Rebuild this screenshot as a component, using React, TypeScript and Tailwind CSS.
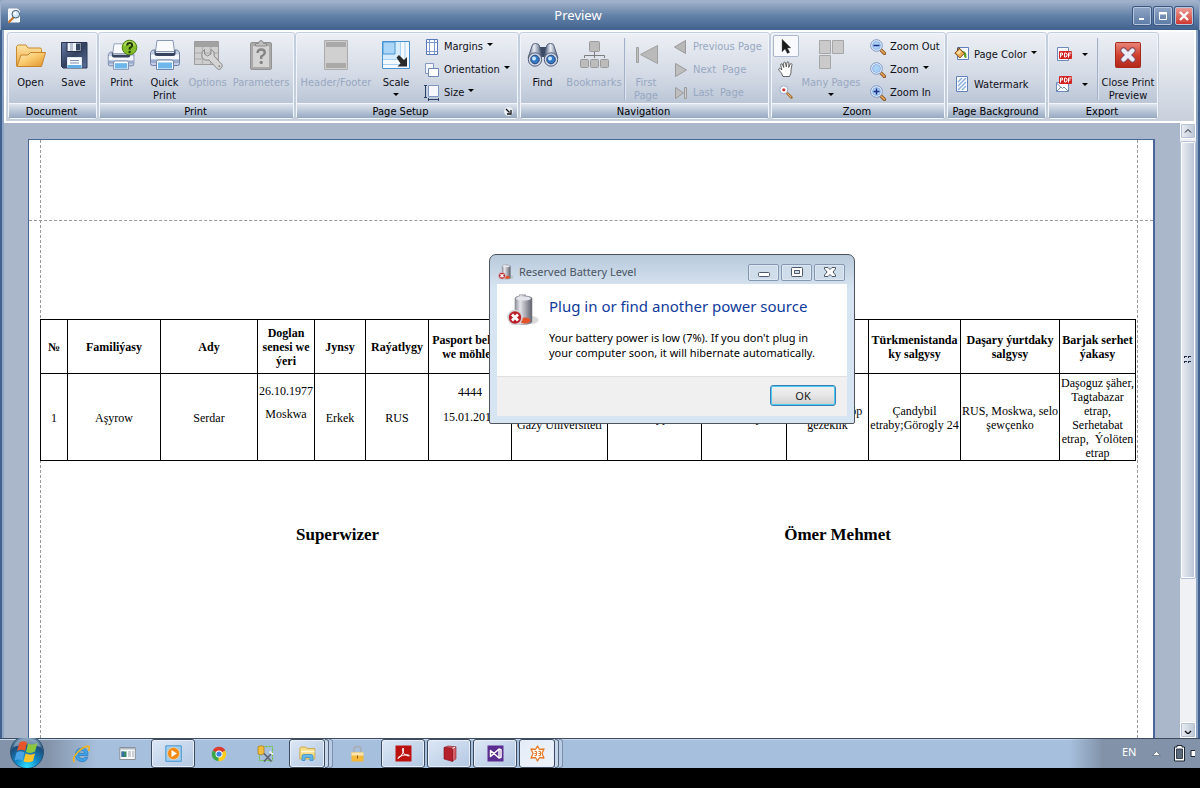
import React from 'react';

type Kids = { children?: React.ReactNode };

const ui = 'font-["DejaVu_Sans_Condensed","Noto_Sans",sans-serif]';
const segoe = 'font-["Noto_Sans","Open_Sans",sans-serif]';

/* ---------- shared pieces ---------- */

function Ico({ size = 32, box = 32, children }: Kids & { size?: number; box?: number }) {
  return (
    <svg width={size} height={size} viewBox={`0 0 ${box} ${box}`} className="shrink-0" aria-hidden="true">
      {children}
    </svg>
  );
}

function Caret() {
  return (
    <svg width="6" height="3" viewBox="0 0 6 3" className="shrink-0" aria-hidden="true">
      <path d="M0 0h6L3 3z" fill="#000" />
    </svg>
  );
}

function Group({ title, width, launcher, children }: Kids & { title: string; width: string; launcher?: boolean }) {
  return (
    <section className={`${width} flex shrink-0 flex-col self-start rounded-[3px] border border-[#f2f5f9] bg-linear-to-b from-[#eceff4] via-[#d3dae5] to-[#adbacd] shadow-[0_0_0_1px_#c3cedd]`}>
      <div className="flex h-[69px] items-start">{children}</div>
      <div className="flex h-[15px] items-center justify-center border-t border-[#f2f5f9] bg-linear-to-b from-[#dfe5ee] to-[#96a8c1] pr-0.5 text-[11px] leading-[13px] text-black">
        <h2 className="flex-1 text-center">{title}</h2>
        {launcher && (
          <button aria-label="Page Setup dialog" className="mr-0.5 flex size-[9px] items-center justify-center rounded-full bg-[#e8edf4]">
            <Ico size={7} box={7}>
              <path d="M1 1l3.500 3.500M6 2v4H2" stroke="#111" strokeWidth="1.300" fill="none" />
            </Ico>
          </button>
        )}
      </div>
    </section>
  );
}

function Big({ icon, lines, width, disabled, drop }: { icon: React.ReactNode; lines: string[]; width: string; disabled?: boolean; drop?: boolean }) {
  return (
    <button disabled={disabled && !drop} className={`${width} flex shrink-0 flex-col items-center pt-[5px] text-[11px] leading-[13px] whitespace-nowrap ${disabled ? 'text-[#98a8c1]' : 'text-[#101018]'}`}>
      {icon}
      <span className="mt-[5px] flex flex-col">{lines.map((l) => <span key={l}>{l}</span>)}</span>
      {drop && <span className="mt-1"><Caret /></span>}
    </button>
  );
}

function Row({ icon, text, disabled, drop, tall }: { icon: React.ReactNode; text: string; disabled?: boolean; drop?: boolean; tall?: boolean }) {
  return (
    <button disabled={disabled} className={`${tall ? 'h-[30px]' : 'h-[23px]'} flex items-center gap-1 text-[11px] leading-[13px] whitespace-pre ${disabled ? 'text-[#98a8c1]' : 'text-[#101018]'}`}>
      {icon}
      <span>{text}</span>
      {drop && <span className="mb-1"><Caret /></span>}
    </button>
  );
}

function Divider() {
  return <div className="mt-1 h-[62px] w-[2px] shrink-0 border-l border-[#a3b2c9] bg-[#dde4ee]" />;
}

/* ---------- ribbon icons ---------- */

const OpenIcon = () => (
  <Ico>
    <defs>
      <linearGradient id="op1" x1="0" y1="0" x2="0" y2="1"><stop offset="0" stopColor="#fde5a6" /><stop offset="1" stopColor="#eda63c" /></linearGradient>
      <linearGradient id="op2" x1="0" y1="0" x2="1" y2="1"><stop offset="0" stopColor="#fff0c4" /><stop offset=".5" stopColor="#f8c767" /><stop offset="1" stopColor="#dd8f2c" /></linearGradient>
    </defs>
    <path d="M1.500 27V7.500l1.500-1.500h8l2 3H25q1.500 0 1.500 1.500v15z" fill="url(#op1)" stroke="#c98a2e" />
    <path d="M2 27.500l4-11.500h7l2.500-2.500h15l-4 14z" fill="url(#op2)" stroke="#c7842c" />
  </Ico>
);

const SaveIcon = () => (
  <Ico>
    <defs>
      <linearGradient id="sv" x1="0" y1="0" x2="1" y2="1"><stop offset="0" stopColor="#6c7fa8" /><stop offset=".5" stopColor="#33415f" /><stop offset="1" stopColor="#5b6f98" /></linearGradient>
    </defs>
    <path d="M3.500 3.500h25.500v25.500h-24l-1.500-1.500z" fill="url(#sv)" stroke="#2b3856" />
    <path d="M9 3.500h14v9H9z" fill="#eef1f7" stroke="#242f4a" />
    <path d="M18 4.500h4v7h-4z" fill="#35435f" />
    <path d="M12 4h3v8h-3z" fill="#b9c3d4" />
    <path d="M9.500 18.500h14v10h-14z" fill="#f8fbff" stroke="#dfe8f4" />
    <path d="M9.500 26h14v3h-14z" fill="#63aee6" />
    <path d="M12 21.500h9M12 24h9" stroke="#8593ae" />
  </Ico>
);

const PrinterBody = () => (
  <g>
    <path d="M8 1.500h16l1.500 11H6.500z" fill="#f8fafd" stroke="#8a99b4" />
    <path d="M1.500 13.500l2-2.500h3v4h19v-4h3l2 2.500v11q0 2-2 2h-25q-2 0-2-2z" fill="#c3cee4" stroke="#6e7ea3" />
    <path d="M2 15.500h28v5H2z" fill="#f4f7fc" />
    <path d="M2 20.500h28v3.500H2z" fill="#9dabce" />
    <path d="M5.500 10.500v4q0 2.500 2.500 2.500h16q2.500 0 2.500-2.500v-4l-1.500 3.500H7z" fill="#37425f" />
    <path d="M7.500 22l2-1h13l2 1v8.500h-17z" fill="#fafdff" stroke="#7385ab" />
    <path d="M9 23.500h14v6H9z" fill="#6db7ea" />
  </g>
);

const QuickIcon = () => <Ico><PrinterBody /></Ico>;

const PrintIcon = () => (
  <Ico>
    <g transform="translate(1 3.500) scale(.88)"><PrinterBody /></g>
    <circle cx="23.500" cy="8.500" r="7.300" fill="#83bd2b" stroke="#4c8013" />
    <path d="M17.500 7q1-5 6-5t6 5q-6-2-12 0z" fill="#c4e573" opacity=".8" />
    <path d="M21 6.500q.3-2.500 2.700-2.500t2.500 2.200q0 1.500-2.500 3v1.600" stroke="#213c08" strokeWidth="2" fill="none" />
    <circle cx="23.600" cy="13" r="1.200" fill="#213c08" />
  </Ico>
);

const OptionsIcon = () => (
  <Ico>
    <path d="M2.500 2.500h24v23h-24z" fill="#cfcfcf" stroke="#9c9c9c" />
    <path d="M3 3h23v5H3z" fill="#a2a2a2" />
    <path d="M3 14h23M3 20h23M10.500 8v17M18.500 8v17" stroke="#b6b6b6" strokeWidth="1.500" />
    <path d="M12.500 10.500v4.500l3 2 3.500-2v-4.500q4 2 3 6.500l8 8.500q.8 2.500-1 4t-3.500.5l-8.500-9q-5 1-7-3-.8-5 2.500-7.500z" fill="#d5d5d5" stroke="#8b8b8b" />
    <circle cx="27.300" cy="27.300" r="1" fill="#8b8b8b" />
  </Ico>
);

const ParamsIcon = () => (
  <Ico>
    <rect x="5.500" y="3.500" width="21" height="27" rx="1.500" fill="#a9a9a9" stroke="#949494" />
    <path d="M8 7h16v21H8z" fill="#d4d4d4" />
    <path d="M10.500 7V4.500h3q.5-3 2.500-3t2.500 3h3V7z" fill="#c0c0c0" stroke="#8b8b8b" />
    <path d="M12.500 14q.3-3.500 3.700-3.500t3.600 3q0 2-3.600 4v2.500" stroke="#858585" strokeWidth="2.400" fill="none" />
    <circle cx="16.200" cy="23.500" r="1.700" fill="#858585" />
  </Ico>
);

const HeaderIcon = () => (
  <Ico>
    <path d="M4.500 1.500h23v29h-23z" fill="#cfcfcf" stroke="#ababab" />
    <path d="M6 3h20v5H6zM6 24h20v5H6z" fill="#a9a9a9" />
    <path d="M6 9h20v14H6z" fill="#d0d0d0" />
  </Ico>
);

const ScaleIcon = () => (
  <Ico>
    <path d="M2.500 2.500h27v27h-27z" fill="#f3f9fe" stroke="#4794d2" />
    <path d="M3 3h18v18H3z" fill="#d6ebfb" />
    <path d="M3 20.500h17.500V3M3 25.500h22V3" stroke="#a8d2f2" fill="none" />
    <path d="M3 3h12v12H3z" fill="#abd6f7" stroke="#4794d2" />
    <path d="M16.500 18.500l2.500-2.500 5 5 3-3v9.500h-9.500l3-3z" fill="#2a2a2a" />
  </Ico>
);

const BinoIcon = () => (
  <Ico>
    <defs>
      <linearGradient id="bn" x1="0" y1="0" x2="1" y2="0"><stop offset="0" stopColor="#4a5873" /><stop offset=".45" stopColor="#e9edf5" /><stop offset="1" stopColor="#4d5c79" /></linearGradient>
    </defs>
    <path d="M12 8h8v10h-8z" fill="#3d4a66" />
    <path d="M5 7q0-2.500 3.500-2.500t4 2.500l2 12H1z" fill="url(#bn)" stroke="#58657f" />
    <path d="M19.500 7q.5-2.500 4-2.500t3.500 2.500l4 12H17.500z" fill="url(#bn)" stroke="#58657f" />
    <circle cx="8" cy="20.500" r="6.700" fill="#d5dbe7" stroke="#4f5c77" />
    <circle cx="24" cy="20.500" r="6.700" fill="#d5dbe7" stroke="#4f5c77" />
    <circle cx="8" cy="20.500" r="4.300" fill="#3178c5" stroke="#27427c" />
    <circle cx="24" cy="20.500" r="4.300" fill="#3178c5" stroke="#27427c" />
    <circle cx="7" cy="19.500" r="2" fill="#cbe9ff" />
    <circle cx="23" cy="19.500" r="2" fill="#cbe9ff" />
  </Ico>
);

const BookmarksIcon = () => (
  <Ico>
    <g fill="#bcbcbc" stroke="#9a9a9a">
      <rect x="11.500" y="2.500" width="10" height="10" rx="1" />
      <rect x="2.500" y="20.500" width="8" height="8" rx="1" />
      <rect x="12.500" y="20.500" width="8" height="8" rx="1" />
      <rect x="22.500" y="20.500" width="8" height="8" rx="1" />
    </g>
    <path d="M16.500 13v6M6.500 19v-2.500h20v2.500" stroke="#7d7d7d" fill="none" />
  </Ico>
);

const FirstIcon = () => (
  <Ico>
    <path d="M6.500 8.500h2v15h-2z" fill="#c0c0c0" stroke="#a0a0a0" />
    <path d="M27.500 6.500v18L10.500 15.500z" fill="#bababa" stroke="#a0a0a0" />
  </Ico>
);

const PagesIcon = () => (
  <Ico>
    <path d="M4.500 1.500h11v13h-11zM17.500 1.500h11v13h-11zM4.500 16.500h11v13h-11z" fill="#cacaca" stroke="#a6a6a6" />
  </Ico>
);

const CloseIcon = () => (
  <Ico>
    <defs>
      <linearGradient id="cl" x1="0" y1="0" x2="0" y2="1"><stop offset="0" stopColor="#e9877a" /><stop offset=".5" stopColor="#d0422f" /><stop offset="1" stopColor="#b3271a" /></linearGradient>
    </defs>
    <rect x="3.500" y="3.500" width="25" height="25" rx="1" fill="url(#cl)" stroke="#a5291c" />
    <path d="M11.500 11.500l9 9M20.500 11.500l-9 9" stroke="#8a4a63" strokeWidth="6.400" strokeLinecap="round" />
    <path d="M11.500 11.500l9 9M20.500 11.500l-9 9" stroke="#e9eef8" strokeWidth="4.400" strokeLinecap="round" />
  </Ico>
);

const MarginsIcon = () => (
  <Ico size={16} box={16}>
    <path d="M2.500.5h11v15h-11z" fill="#fbfcff" stroke="#5a78b8" />
    <path d="M5.500 1v14M10.500 1v14M3 3.500h10M3 12.500h10" stroke="#7d98cd" />
  </Ico>
);
const OrientIcon = () => (
  <Ico size={16} box={16}>
    <path d="M1.500 1.500h8v10h-8z" fill="#f2f5fb" stroke="#8598bf" />
    <path d="M4.500 6.500h10v8h-10z" fill="#fff" stroke="#6f87b9" />
  </Ico>
);
const SizeIcon = () => (
  <Ico size={16} box={16}>
    <path d="M4.500.5h10v11h-10z" fill="#f6f8fd" stroke="#8096c4" />
    <path d="M0 .5h3M1.500.5v12M0 12.500h3M4.500 14.500h10M4.500 13v3M14.500 13v3" stroke="#2d3e67" fill="none" />
  </Ico>
);
const PrevIcon = () => <Ico size={16} box={16}><path d="M12.500 1.500v13L1.500 8z" fill="#b8b8b8" stroke="#9a9a9a" /></Ico>;
const NextIcon = () => <Ico size={16} box={16}><path d="M2.500 1.500v13L13.500 8z" fill="#bebebe" stroke="#9a9a9a" /></Ico>;
const LastIcon = () => (
  <Ico size={16} box={16}>
    <path d="M2.500 2.500v11L10.500 8z" fill="#bebebe" stroke="#9a9a9a" />
    <path d="M11.500 2.500h2v11h-2z" fill="#d0d0d0" stroke="#9a9a9a" />
  </Ico>
);

function Lens({ sign }: { sign?: 'plus' | 'minus' }) {
  return (
    <Ico size={16} box={16}>
      <path d="M10.500 10.500l4 4" stroke="#8f5a24" strokeWidth="3.400" strokeLinecap="round" />
      <path d="M10.800 10.800l3.500 3.500" stroke="#e9a65c" strokeWidth="1.600" strokeLinecap="round" />
      <circle cx="6.500" cy="6.500" r="5.800" fill="#eaf3fd" stroke="#7b93c4" />
      <circle cx="6.500" cy="6.500" r="4" fill="#a9d1f5" stroke="#8fb4e2" />
      {sign && <path d={sign === 'plus' ? 'M3.500 6.500h6M6.500 3.500v6' : 'M3.500 6.500h6'} stroke="#1c2f8a" strokeWidth="1.500" />}
    </Ico>
  );
}

const PointerIcon = () => <Ico size={16} box={16}><path d="M4 1v13l3-3 2.300 4.500 2.500-1.100L9.500 10H13z" fill="#1b1b1b" stroke="#777" strokeWidth=".4" /></Ico>;
const HandIcon = () => (
  <Ico size={16} box={16}>
    <path d="M5 15.500Q4 12 1 9.200.2 7.700 1.500 7.300q1 0 2.300 1.700L2.700 4q0-1.600 1.400-1.200l1.600 3.700L5.600 2q.5-1.600 1.800-.5l.9 4.500.7-4.700q1-1.200 1.900.2l-.2 5 1.600-3.600q1.300-.9 1.700.6L13 9q.7 3-1.500 6.500z" fill="#fff" stroke="#444" strokeWidth=".8" />
  </Ico>
);
const MagnifyIcon = () => (
  <Ico size={16} box={16}>
    <path d="M9 9l4.500 4.500" stroke="#a8763b" strokeWidth="2.600" strokeLinecap="round" />
    <path d="M9.500 9.500l3.500 3.500" stroke="#f0b66f" strokeWidth="1" />
    <circle cx="5.800" cy="5.800" r="4" fill="#fff" stroke="#9cadca" />
    <circle cx="5.800" cy="5.800" r="1.600" fill="#cf3a3a" />
  </Ico>
);
const ColorIcon = () => (
  <Ico size={16} box={16}>
    <path d="M3.500 1.500h11v12h-11z" fill="#fbfcff" stroke="#5f7fbd" />
    <path d="M8 5q5-.5 4.500 7-2.500.5-2.500-3z" fill="#59a31d" />
    <path d="M.8 7l5-4.500 4.500 5-4.500 4.500z" fill="#e9a94f" stroke="#7b4d16" />
    <path d="M2.500 6.500l3-2.500 2 2-3 2.500z" fill="#fbe0a8" />
    <path d="M3.500 4.500Q3.500.8 6 2.500" stroke="#5a3a14" fill="none" />
  </Ico>
);
const WaterIcon = () => (
  <Ico size={16} box={16}>
    <path d="M2.500.5h11v15h-11z" fill="#fbfcff" stroke="#6482bd" />
    <path d="M4 6l4-4M4 10l8-8M4 14l8-8M8 14l4-4" stroke="#8fb0de" strokeWidth="1.500" />
  </Ico>
);
const PdfMark = ({ y }: { y: number }) => (
  <g transform={`translate(3 ${y})`}>
    <rect width="13" height="8" rx="1" fill="#d22222" />
    <path transform="translate(1 1.500)" d="M.5 5V.5h2v2h-2M4.500.5v4h1.500l1-1v-2l-1-1zM8.500 5V.5h3M8.500 2.500h2" stroke="#fff" fill="none" />
  </g>
);
const PdfIcon = () => (
  <Ico size={16} box={16}>
    <path d="M1.500 1.500h11v13h-11z" fill="#fbfcff" stroke="#7089bb" />
    <PdfMark y={5} />
  </Ico>
);
const PdfMailIcon = () => (
  <Ico size={16} box={16}>
    <path d="M.5 6.500h12v9H.500z" fill="#fbfcff" stroke="#7089bb" />
    <path d="M.5 15.500l4.500-4.500 1.500 1.500L8 11l4.500 4.500M.5 7l5 5" fill="none" stroke="#7089bb" />
    <PdfMark y={0} />
  </Ico>
);

/* ---------- window chrome ---------- */

function TitleBar() {
  const btn = 'flex size-[18px] items-center justify-center rounded-[2px] border border-[#b7c6dc] shadow-[0_0_0_1px_#3a5683]';
  return (
    <header className="flex h-[30px] shrink-0 items-center rounded-t-[4px] border-t border-r border-l border-[#9fb1cc] bg-linear-to-b from-[#a3b3cb] via-[#6482a8] to-[#41628f] px-1.5">
      <Ico size={16} box={16}>
        <path d="M1.500 1h9l2 2v11h-11z" fill="#eef4fb" stroke="#fff" />
        <path d="M7 9l-5 5" stroke="#c47a2f" strokeWidth="2.400" strokeLinecap="round" />
        <circle cx="8.800" cy="6.200" r="3.800" fill="#cfe6f8" stroke="#44586f" />
        <circle cx="8" cy="5.500" r="1.400" fill="#fff" />
      </Ico>
      <h1 className={`flex-1 pb-0.5 text-center text-[13px] leading-[18px] text-white ${segoe}`}>Preview</h1>
      <div className="flex justify-end gap-[3px]">
        <button aria-label="Minimize" className={`${btn} bg-linear-to-b from-[#8ea4c4] to-[#5f7da8]`}>
          <Ico size={12} box={12}><path d="M3 8h5v2H3z" fill="#fff" /></Ico>
        </button>
        <button aria-label="Maximize" className={`${btn} bg-linear-to-b from-[#8ea4c4] to-[#5f7da8]`}>
          <Ico size={12} box={12}><path d="M2.500 3.500h7v6h-7z" fill="none" stroke="#fff" /><path d="M2 2h8v2.500H2z" fill="#fff" /></Ico>
        </button>
        <button aria-label="Close" className={`${btn} bg-linear-to-b from-[#e89a94] to-[#cf3530]`}>
          <Ico size={12} box={12}><path d="M2 2l8 8M10 2l-8 8" stroke="#fff" strokeWidth="2.400" /></Ico>
        </button>
      </div>
    </header>
  );
}

function Ribbon() {
  return (
    <nav aria-label="Ribbon" className={`flex h-[93px] shrink-0 gap-[2px] overflow-hidden border-2 border-white bg-linear-to-b from-[#f4f5f7] to-[#c8d0dc] px-[2px] py-px ${ui}`}>
      <Group title="Document" width="w-[89px]">
        <Big width="w-[43px]" icon={<OpenIcon />} lines={['Open']} />
        <Big width="w-[43px]" icon={<SaveIcon />} lines={['Save']} />
      </Group>
      <Group title="Print" width="w-[195px]">
        <Big width="w-[43px]" icon={<PrintIcon />} lines={['Print']} />
        <Big width="w-[43px]" icon={<QuickIcon />} lines={['Quick', 'Print']} />
        <Big width="w-[43px]" icon={<OptionsIcon />} lines={['Options']} disabled />
        <Big width="w-[64px]" icon={<ParamsIcon />} lines={['Parameters']} disabled />
      </Group>
      <Group title="Page Setup" width="w-[222px]" launcher>
        <Big width="w-[78px]" icon={<HeaderIcon />} lines={['Header/Footer']} disabled />
        <Big width="w-[42px]" icon={<ScaleIcon />} lines={['Scale']} drop />
        <div className="ml-[7px] flex flex-col pt-px">
          <Row icon={<MarginsIcon />} text="Margins" drop />
          <Row icon={<OrientIcon />} text="Orientation" drop />
          <Row icon={<SizeIcon />} text="Size" drop />
        </div>
      </Group>
      <Group title="Navigation" width="w-[249px]">
        <Big width="w-[43px]" icon={<BinoIcon />} lines={['Find']} />
        <Big width="w-[60px]" icon={<BookmarksIcon />} lines={['Bookmarks']} disabled />
        <Divider />
        <Big width="w-[40px]" icon={<FirstIcon />} lines={['First', 'Page']} disabled />
        <div className="ml-[7px] flex flex-col pt-px">
          <Row icon={<PrevIcon />} text="Previous Page" disabled />
          <Row icon={<NextIcon />} text="Next  Page" disabled />
          <Row icon={<LastIcon />} text="Last  Page" disabled />
        </div>
      </Group>
      <Group title="Zoom" width="w-[174px]">
        <div className="flex w-[28px] flex-col items-center pt-px">
          <button aria-label="Pointer" className="flex h-[22px] w-[26px] items-center justify-center rounded-[2px] border border-[#a9b8cf] bg-[#f7f9fc]"><PointerIcon /></button>
          <button aria-label="Hand tool" className="flex h-[23px] w-[26px] items-center justify-center"><HandIcon /></button>
          <button aria-label="Magnifier" className="flex h-[23px] w-[26px] items-center justify-center"><MagnifyIcon /></button>
        </div>
        <Big width="w-[62px]" icon={<PagesIcon />} lines={['Many Pages']} disabled drop />
        <div className="ml-2 flex flex-col pt-px">
          <Row icon={<Lens sign="minus" />} text="Zoom Out" />
          <Row icon={<Lens />} text="Zoom" drop />
          <Row icon={<Lens sign="plus" />} text="Zoom In" />
        </div>
      </Group>
      <Group title="Page Background" width="w-[99px]">
        <div className="flex flex-col pt-[5px] pl-1.5">
          <Row icon={<ColorIcon />} text="Page Color" drop tall />
          <Row icon={<WaterIcon />} text="Watermark" tall />
        </div>
      </Group>
      <Group title="Export" width="w-[110px]">
        <div className="flex w-[48px] flex-col pt-[5px] pl-[7px]">
          <button aria-label="Export to PDF" className="flex h-[30px] items-center gap-[10px]"><PdfIcon /><Caret /></button>
          <button aria-label="E-mail as PDF" className="flex h-[30px] items-center gap-[10px]"><PdfMailIcon /><Caret /></button>
        </div>
        <Divider />
        <Big width="w-[58px]" icon={<CloseIcon />} lines={['Close Print', 'Preview']} />
      </Group>
    </nav>
  );
}

/* ---------- report ---------- */

type Column = { head?: string; cell: React.ReactNode; width: string };

const columns: Column[] = [
  { head: '№', cell: '1', width: 'w-[27px]' },
  { head: 'Familiýasy', cell: 'Aşyrow', width: 'w-[93px]' },
  { head: 'Ady', cell: 'Serdar', width: 'w-[97px]' },
  { head: 'Doglan senesi we ýeri', cell: <div className="h-[76px] leading-[23px]">26.10.1977<br />Moskwa</div>, width: 'w-[57px]' },
  { head: 'Jynsy', cell: 'Erkek', width: 'w-[51px]' },
  { head: 'Raýatlygy', cell: 'RUS', width: 'w-[63px]' },
  { head: 'Pasport belgisi we möhleti', cell: <div className="h-[76px] leading-[25px]">4444<br />15.01.2017</div>, width: 'w-[83px]' },
  { cell: <><br />Gazy Universiteti</>, width: 'w-[96px]' },
  { cell: 'Talyp', width: 'w-[94px]' },
  { cell: 'Okuwy', width: 'w-[85px]' },
  { cell: <>1 ýyl, köp köp<br />gezeklik</>, width: 'w-[82px]' },
  { head: 'Türkmenistanda ky salgysy', cell: <>Çandybil<br />etraby;Görogly 24</>, width: 'w-[92px]' },
  { head: 'Daşary ýurtdaky salgysy', cell: <>RUS, Moskwa, selo<br />şewçenko</>, width: 'w-[99px]' },
  { head: 'Barjak serhet ýakasy', cell: <>Daşoguz şäher,<br />Tagtabazar<br />etrap,<br />Serhetabat<br />etrap,&nbsp; Ýolöten<br />etrap</>, width: 'w-[76px]' },
];

function Report() {
  return (
    <article className='relative h-full border-t border-r-2 border-l border-[#4a6797] bg-white pt-[179px] pr-[17px] pl-[11px] font-["Liberation_Serif",serif] text-black'>
      <div className="absolute inset-y-0 left-[11px] border-l border-dashed border-[#9a9a9a]" />
      <div className="absolute inset-y-0 right-[15px] border-l border-dashed border-[#9a9a9a]" />
      <div className="absolute inset-x-0 top-[80px] border-t border-dashed border-[#9a9a9a]" />
      <table className="relative w-full table-fixed border-collapse text-center text-[12px] leading-[14px]">
        <colgroup>{columns.map((c, i) => <col key={i} className={c.width} />)}</colgroup>
        <thead>
          <tr className="h-[54px]">
            {columns.map((c, i) => <th key={i} scope="col" className="border border-black px-0 pt-px pb-0 font-bold">{c.head}</th>)}
          </tr>
        </thead>
        <tbody>
          <tr className="h-[87px]">
            {columns.map((c, i) => <td key={i} className="border border-black px-0 pt-px pb-0 whitespace-nowrap">{c.cell}</td>)}
          </tr>
        </tbody>
      </table>
      <footer className="relative mt-16 flex justify-between pr-[245px] pl-64 text-[17px] leading-5 font-bold">
        <span>Superwizer</span>
        <span>Ömer Mehmet</span>
      </footer>
    </article>
  );
}

function Scrollbar() {
  const end = 'flex h-4 shrink-0 items-center justify-center rounded-[2px] border border-white bg-linear-to-r from-[#eceff4] to-[#bcc7d6] shadow-[inset_0_0_0_1px_#b5c2d5]';
  return (
    <div className="flex w-4 shrink-0 flex-col bg-[#eff1f5]">
      <button aria-label="Scroll up" className={end}><Ico size={8} box={8}><path d="M1 5.500l3-3 3 3" stroke="#111" fill="none" /></Ico></button>
      <div className="mt-[2px] flex h-[438px] shrink-0 items-center justify-center rounded-[2px] border border-[#b5c2d5] bg-linear-to-r from-[#eceff4] to-[#b8c4d5] shadow-[inset_0_0_0_1px_#fff]">
        <Ico size={8} box={8}><path d="M0 0h3v1H1v1H0zM4 0h3v1H5v1H4zM0 5h3v1H1v1H0zM4 5h3v1H5v1H4z" fill="#1f2a44" /></Ico>
      </div>
      <div className="flex-1" />
      <button aria-label="Scroll down" className={end}><Ico size={8} box={8}><path d="M1 5l3 3 3-3" stroke="#111" fill="none" strokeWidth="1.400" /></Ico></button>
    </div>
  );
}

/* ---------- battery dialog ---------- */

function Battery({ size }: { size: number }) {
  return (
    <Ico size={size}>
      <defs>
        <linearGradient id="bt" x1="0" y1="0" x2="1" y2="0"><stop offset="0" stopColor="#8e8f98" /><stop offset=".3" stopColor="#e6e6ec" /><stop offset="1" stopColor="#5d5f6b" /></linearGradient>
      </defs>
      <ellipse cx="24" cy="26" rx="7.500" ry="4" fill="#b5b5b5" opacity=".5" />
      <path d="M8 4.500q0-2 4.500-2.500V.8h6V2q6.500.5 6.500 2.500v23.500q-2 2.500-8.500 2.500t-8.500-2.500z" fill="url(#bt)" stroke="#84858f" strokeWidth=".6" />
      <ellipse cx="16.500" cy="4.500" rx="7.500" ry="2" fill="#e4e5ea" />
      <ellipse cx="18" cy="26.500" rx="5.500" ry="3" fill="#e4532a" />
      <circle cx="8" cy="23.500" r="7" fill="#b9202a" stroke="#d5d5da" strokeWidth="1.600" />
      <path d="M5 20.500l6 6M11 20.500l-6 6" stroke="#fff" strokeWidth="2.800" />
    </Ico>
  );
}

function Dialog() {
  const cap = 'flex h-[17px] w-[31px] items-center justify-center rounded-[2px] border border-[#8497b0] bg-[#cfdcea] shadow-[inset_0_0_0_1px_#dfe8f2]';
  return (
    <div role="dialog" aria-labelledby="battery-title" className={`absolute top-[254px] left-[489px] flex w-[366px] flex-col rounded-t-[7px] rounded-b-[2px] border border-[#4d545c] bg-linear-to-b from-[#b9cadb] via-[#d7e4f1] via-20% to-[#d7e4f1] px-[7px] pb-[7px] ${segoe}`}>
      <div className="flex h-[29px] items-center pt-[5px] pr-[2px] pl-px">
        <Battery size={16} />
        <h2 id="battery-title" className="ml-[5px] flex-1 text-[11px] leading-4 text-[#4a5563]">Reserved Battery Level</h2>
        <div className="flex gap-[2px]">
          <button aria-label="Minimize dialog" className={cap}><Ico size={12} box={12}><rect x=".5" y="6.500" width="11" height="4" rx="1" fill="#fff" stroke="#4c5868" /></Ico></button>
          <button aria-label="Maximize dialog" className={cap}><Ico size={12} box={12}><rect x=".5" y="1.500" width="11" height="9" rx="1" fill="#fff" stroke="#4c5868" /><path d="M3.500 4.500h5v3h-5z" fill="#cfdcea" stroke="#4c5868" /></Ico></button>
          <button aria-label="Close dialog" className={cap}><Ico size={12} box={12}><path d="M.5 1.500h3.500l2 2 2-2h3.500v1.500L9 6l2.500 3v1.500H8l-2-2-2 2H.5V9L3 6 .5 3z" fill="#fff" stroke="#4c5868" /></Ico></button>
        </div>
      </div>
      <div className="flex h-[92px] gap-[10px] bg-white pt-[10px] pl-[10px]">
        <Battery size={32} />
        <div>
          <h3 className="text-[15px] leading-6 text-[#0f3a9b]">Plug in or find another power source</h3>
          <p className="mt-3 text-[11px] leading-[15px] text-black">Your battery power is low (7%). If you don't plug in<br />your computer soon, it will hibernate automatically.</p>
        </div>
      </div>
      <div className="flex h-[40px] items-center justify-end border-t border-[#dfdfdf] bg-[#f0f0f0] pr-[11px] pb-0.5">
        <button className="h-[21px] w-[66px] rounded-[3px] border border-[#3c7fb1] bg-linear-to-b from-[#f2f2f2] via-[#e6e6e6] to-[#cfcfcf] text-[11px] leading-[17px] text-[#1a1a1a] shadow-[inset_0_0_0_1px_#48cbf2]">OK</button>
      </div>
    </div>
  );
}

/* ---------- taskbar ---------- */

function Task({ label, active, bright, stacked, children }: Kids & { label: string; active?: boolean; bright?: boolean; stacked?: boolean }) {
  const frame = active
    ? `border-[#3e4b5e] shadow-[inset_0_0_0_1px_#e6effa] ${bright ? 'bg-linear-to-br from-[#e3ecf7] to-[#eef3fa]' : 'bg-linear-to-br from-[#dce7f5] to-[#b3c8e3]'}`
    : 'border-transparent';
  return (
    <div className="flex w-[46px] shrink-0 pl-px">
      <button aria-label={label} className={`flex h-full items-center justify-center rounded-[3px] border ${stacked ? 'w-[36px]' : 'w-[44px]'} ${frame}`}>{children}</button>
      {stacked && <><span className="w-1 rounded-r-[3px] border-y border-r border-[#56657b] bg-[#c6d7ec]" /><span className="w-1 rounded-r-[3px] border-y border-r border-[#7d90ab] bg-[#b9cde6]" /></>}
    </div>
  );
}

function Taskbar() {
  return (
    <footer className="flex h-[30px] shrink-0 border-t border-[#3f4c60] bg-linear-to-r from-[#8394aa] from-4% via-[#a6bfdc] via-8% to-[#a6bfdc] shadow-[inset_0_1px_0_#c6d8ec]">
      <button aria-label="Start" className="-mt-px mr-[13px] ml-[9px] shrink-0">
        <svg width="36" height="31" viewBox="0 0 36 31" aria-hidden="true">
          <defs>
            <radialGradient id="orb" cx=".5" cy=".95" r=".9"><stop offset="0" stopColor="#2fe0ff" /><stop offset=".4" stopColor="#1187c6" /><stop offset=".75" stopColor="#1c4e7c" /><stop offset="1" stopColor="#6f8ba8" /></radialGradient>
          </defs>
          <circle cx="18" cy="14" r="16.500" fill="url(#orb)" stroke="#2c5474" />
          <path d="M4 9q4-9 14-9t14 9q-14-5-28 0z" fill="#c6d6e5" opacity=".45" />
          <path d="M10.500 4.500q4-2.500 7.500 0L16 13q-3.500-2.300-8 0z" fill="#e9552b" />
          <path d="M19 5.500q4 2.300 9.500-.5L26 13.500q-4 2.500-9 .5z" fill="#8dc63f" />
          <path d="M7.500 14.500q4-2.300 8 0L13.500 22.500q-3.500-2.200-8 0z" fill="#4aa3e6" />
          <path d="M16.500 15.500q4.500 2.300 9.500 0L24 23q-4.500 2.300-9.500.5z" fill="#fdc42d" />
        </svg>
      </button>
      <Task label="Internet Explorer">
        <Ico size={18} box={18}>
          <path d="M16 10.500H6.500q.5 3.200 3.700 3.200 1.800 0 2.600-1.500h3Q14.500 16.700 10 16.700 3.700 16.200 3.200 9.800 3.700 3.300 10 3q6.500.3 6 7.500zM6.600 8.300h6.200q-.4-2.700-3-2.700t-3.200 2.700z" fill="#3ea3e8" stroke="#1d6fb8" strokeWidth=".6" />
          <path d="M2.500 17Q-.5 13.500 6 7T17 1.500q.8 1.500-.5 4.500" stroke="#efb41f" strokeWidth="1.700" fill="none" />
        </Ico>
      </Task>
      <Task label="Program window">
        <Ico size={17} box={17}>
          <path d="M.8 2.500h15.500v12H.8z" fill="#f7f8f9" stroke="#8a9097" />
          <path d="M1 3h15v1.500H1z" fill="#b4bbc2" />
          <path d="M2.500 6.500h5v5.500h-5z" fill="#358a63" /><path d="M2.500 6.500h2.500v5.500H2.500z" fill="#3a6ea5" />
          <path d="M9 7h3M9 9h3M9 11h3M14 6v6" stroke="#9fa7ae" />
        </Ico>
      </Task>
      <Task label="Media Player" active>
        <Ico size={17} box={17}>
          <path d="M.8.8h15.500v15.500H.8z" fill="#9fcdee" stroke="#4a96cf" />
          <circle cx="8.500" cy="8.500" r="6" fill="#f28a13" stroke="#fbd9a8" strokeWidth=".7" />
          <path d="M6.500 5v7l5.500-3.500z" fill="#fff" />
        </Ico>
      </Task>
      <Task label="Chrome">
        <Ico size={16} box={16}>
          <path d="M8 8L1.800 4.400A7.200 7.200 0 0 1 14.300 4.600z" fill="#dd3b2c" />
          <path d="M8 8L1.800 4.400A7.200 7.200 0 0 0 7.500 15.200z" fill="#3aa745" />
          <path d="M8 8l6.300-3.400A7.200 7.200 0 0 1 7.500 15.200z" fill="#fbcb1e" />
          <circle cx="8" cy="8" r="3.500" fill="#fff" /><circle cx="8" cy="8" r="2.600" fill="#3d7fe0" />
        </Ico>
      </Task>
      <Task label="Database tools">
        <Ico size={17} box={17}>
          <path d="M2.500 1.500h13v14h-13z" fill="none" stroke="#67c61d" strokeDasharray="2 1" />
          <path d="M1 1.500q3-1.500 6 0v7.500q-3 1.500-6 0z" fill="#f2bf3c" stroke="#a87a17" strokeWidth=".7" />
          <path d="M7 8.500l7.500 8M15 8l-8 8.500" stroke="#5d6670" strokeWidth="1.700" /><path d="M12.500 6.500l3.500 3" stroke="#e9edf0" strokeWidth="2" />
        </Ico>
      </Task>
      <Task label="Explorer" active stacked>
        <Ico size={17} box={17}>
          <path d="M.8 3.500l1-1.500h5l1 1.500h8V14H.8z" fill="#f5dc86" stroke="#c6a23f" strokeWidth=".8" />
          <path d="M2 6.500h13.500" stroke="#fff8d2" strokeWidth="1.600" />
          <path d="M3 15.500v-4q0-2 2-2h7q2 0 2 2v4h-3v-3H6v3z" fill="#63b7ea" stroke="#2f84c0" strokeWidth=".7" />
        </Ico>
      </Task>
      <Task label="Lock">
        <Ico size={17} box={17}>
          <path d="M5 8V4.500Q5 1.500 8.500 1.500T12 4.500V8" stroke="#a9adb3" strokeWidth="1.700" fill="none" />
          <path d="M2.500 7.500h12v9h-12z" fill="#f4b83a" /><path d="M2.500 7.500h12v3h-12z" fill="#fbe6b0" />
          <path d="M8 10.500h1v3H8z" fill="#7d5a14" />
        </Ico>
      </Task>
      <Task label="Acrobat" active>
        <Ico size={17} box={17}>
          <path d="M.5.5h16v16H.5z" fill="#bb1210" />
          <path d="M3 13.500q3.500-2 5-6 1-3.500.3-4.500-1.200 0-.5 3.500 1.200 4 6.500 4.500.3-1.500-3-1.300-4 .3-7.500 2.300Q2.300 13 3 13.500z" fill="none" stroke="#fff" strokeWidth="1" />
        </Ico>
      </Task>
      <Task label="Dictionary" active>
        <Ico size={17} box={17}>
          <path d="M3 2.500L7 1l8 .8v12L11 16.500v-13z" fill="#d8606a" stroke="#8d1a22" strokeWidth=".6" />
          <path d="M3 2.500l8.500 1v13L3 14z" fill="#b5202a" stroke="#7d1219" strokeWidth=".6" />
          <path d="M11.500 3.500l2.500-1.300" stroke="#fff" />
        </Ico>
      </Task>
      <Task label="Visual Studio" active>
        <Ico size={17} box={17}>
          <path d="M.5.5h16v16H.5z" fill="#5c2d91" />
          <path d="M3.500 5.500v6L12 4l2 .8v7.400l-2 .8z" fill="none" stroke="#fff" strokeWidth="1.500" strokeLinejoin="round" />
          <path d="M12 4v9" stroke="#fff" strokeWidth="1.500" />
        </Ico>
      </Task>
      <Task label="Report application" active bright stacked>
        <Ico size={17} box={17}>
          <path d="M8.500 1l2 3.500 4.500-.5-2 4.500 2 4.500-4.500-.5-2 3.500-2-3.500L2 13l2-4.500L2 4l4.500.5z" fill="#fff" stroke="#ea7a2c" strokeWidth="1.300" strokeLinejoin="round" />
          <path d="M5.500 6.500h2v4h-2M9.500 6.500h2v4h-2M5.500 8.500h2M9.500 8.500h2" stroke="#ea7a2c" fill="none" />
        </Ico>
      </Task>
      <div className={`ml-auto flex w-[130px] shrink-0 items-center overflow-hidden bg-linear-to-r from-[#8293a9]/0 to-[#8293a9] to-25% pl-[52px] text-[11px] leading-4 text-white ${segoe}`}>
        <span className="-mt-1">EN</span>
        <button aria-label="Show hidden icons" className="ml-4 shrink-0"><Ico size={9} box={9}><path d="M.5 6.500L4.500 2.500l4 4z" fill="#fff" stroke="#55657c" strokeWidth=".7" /></Ico></button>
        <svg width="13" height="17" viewBox="0 0 13 17" className="ml-3 shrink-0" aria-hidden="true">
          <path d="M4 .5h5v1.500h2.500v14H1.500V2H4z" fill="#fff" stroke="#1d2733" />
          <path d="M3.500 4h6v9.500h-6z" fill="#5b6a7b" stroke="#1d2733" strokeWidth=".8" />
        </svg>
        <Ico size={9} box={9}><path d="M5 1.500h5v6H5z" fill="#fff" stroke="#1d2733" /></Ico>
      </div>
    </footer>
  );
}

export default function App() {
  return (
    <div className="relative flex h-screen flex-col overflow-hidden bg-black">
      <div className="flex min-h-0 flex-1 flex-col bg-[#8ea4c4]">
        <TitleBar />
        <div className="flex min-h-0 flex-1 flex-col border-x-2 border-[#41628f] px-[2px]">
          <Ribbon />
          <main className="flex min-h-0 flex-1 bg-[#aab7ca]">
            <div className="min-w-0 flex-1 pt-4 pr-[25px] pl-6">
              <Report />
            </div>
            <Scrollbar />
          </main>
        </div>
      </div>
      <Taskbar />
      <div className="h-5 shrink-0 bg-black" />
      <Dialog />
    </div>
  );
}
